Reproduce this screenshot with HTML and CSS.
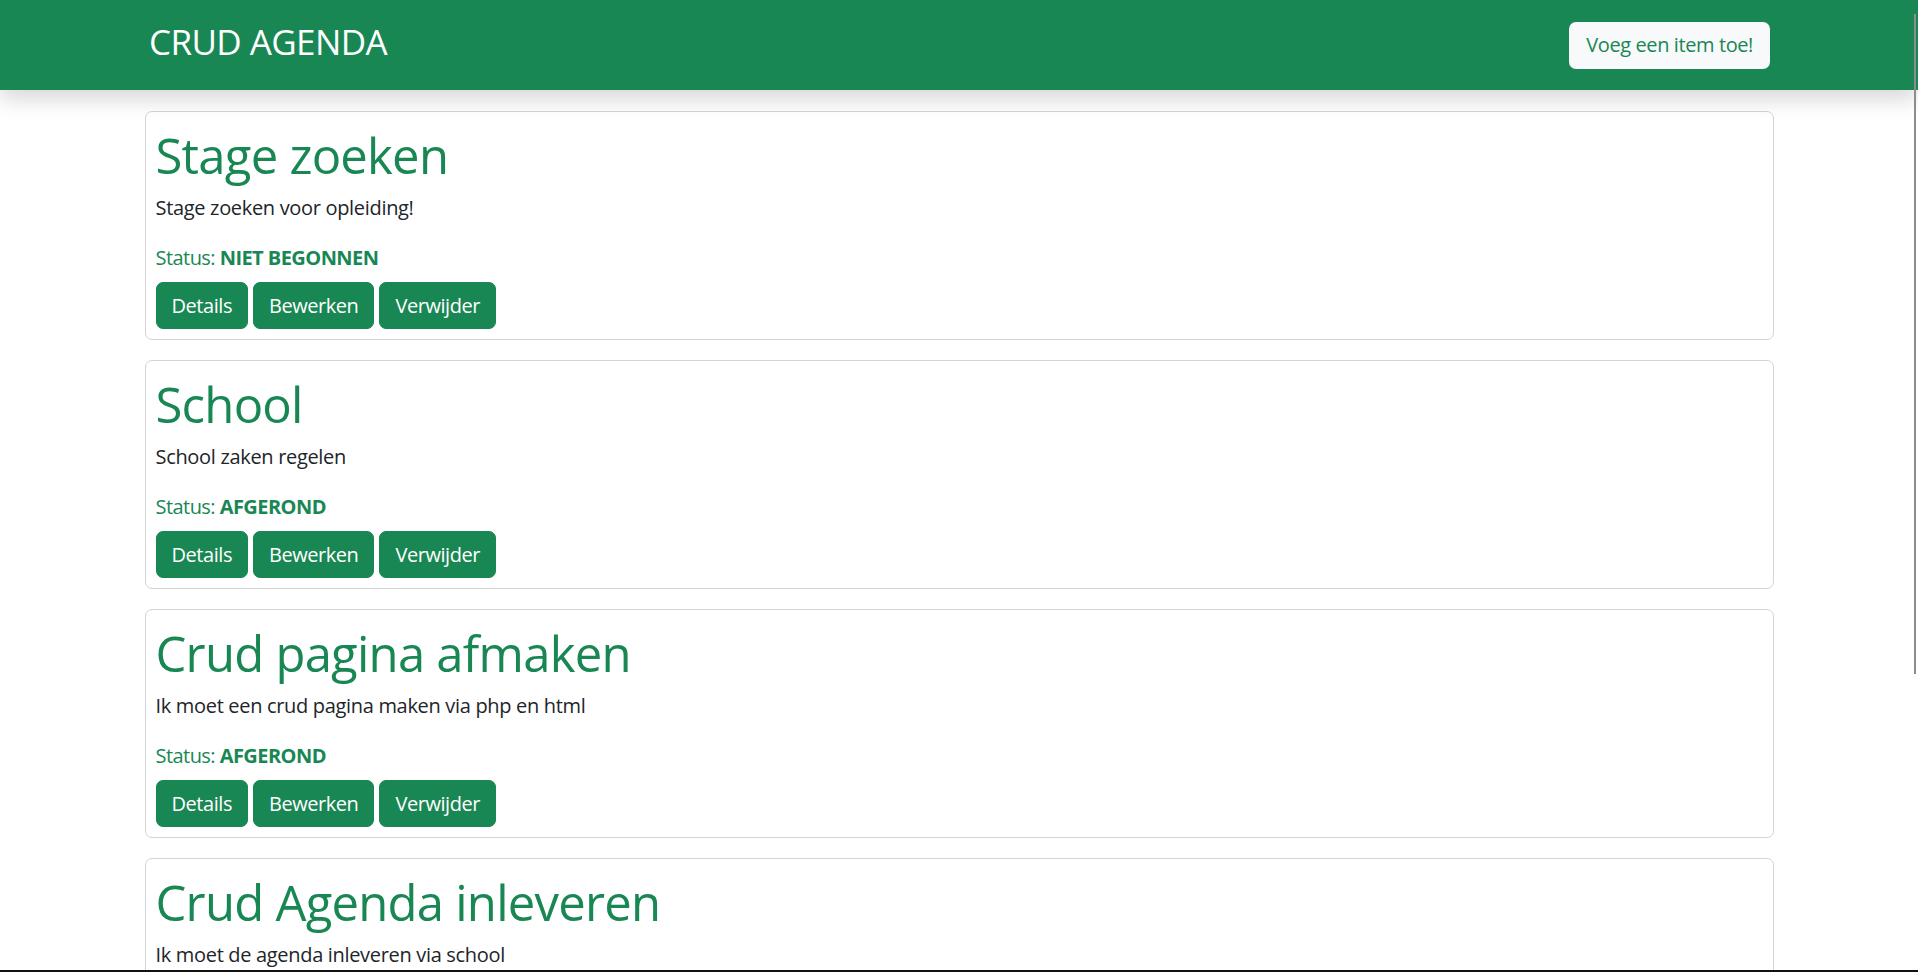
FILE: index.html
```html
<!DOCTYPE html>
<html lang="nl">
<head>
<meta charset="utf-8">
<title>CRUD Agenda</title>
<link rel="stylesheet" href="styles.css">
</head>
<body>
<header class="navbar">
  <div class="navbar-inner">
    <span class="brand">CRUD AGENDA</span>
    <a class="btn-add" href="#">Voeg een item toe!</a>
  </div>
</header>
<main class="container">
  <section class="card">
    <h1 class="card-title">Stage zoeken</h1>
    <p class="card-text">Stage zoeken voor opleiding!</p>
    <p class="status">Status: <strong>NIET BEGONNEN</strong></p>
    <div class="actions">
      <a class="btn" href="#">Details</a>
      <a class="btn" href="#">Bewerken</a>
      <a class="btn" href="#">Verwijder</a>
    </div>
  </section>
  <section class="card">
    <h1 class="card-title">School</h1>
    <p class="card-text">School zaken regelen</p>
    <p class="status">Status: <strong>AFGEROND</strong></p>
    <div class="actions">
      <a class="btn" href="#">Details</a>
      <a class="btn" href="#">Bewerken</a>
      <a class="btn" href="#">Verwijder</a>
    </div>
  </section>
  <section class="card">
    <h1 class="card-title">Crud pagina afmaken</h1>
    <p class="card-text">Ik moet een crud pagina maken via php en html</p>
    <p class="status">Status: <strong>AFGEROND</strong></p>
    <div class="actions">
      <a class="btn" href="#">Details</a>
      <a class="btn" href="#">Bewerken</a>
      <a class="btn" href="#">Verwijder</a>
    </div>
  </section>
  <section class="card">
    <h1 class="card-title">Crud Agenda inleveren</h1>
    <p class="card-text">Ik moet de agenda inleveren via school</p>
    <p class="status">Status: <strong>NIET BEGONNEN</strong></p>
    <div class="actions">
      <a class="btn" href="#">Details</a>
      <a class="btn" href="#">Bewerken</a>
      <a class="btn" href="#">Verwijder</a>
    </div>
  </section>
</main>
<div class="scroll-thumb"></div>
<div class="bottom-line"></div>
</body>
</html>
```

FILE: styles.css
```css
html, body {
  margin: 0;
  padding: 0;
  height: 100%;
  overflow: hidden;
  background: #fff;
}

body {
  font-family: "Open Sans", "Noto Sans", sans-serif;
  color: #212529;
  font-size: 20px;
  line-height: 30px;
}

.navbar {
  background: #198754;
  height: 90px;
  box-shadow: 0 10px 20px rgba(0, 0, 0, 0.15);
  display: flex;
  align-items: center;
  position: relative;
  z-index: 1;
}

.navbar-inner {
  width: 1622px;
  margin: 0 auto;
  display: flex;
  align-items: center;
  justify-content: space-between;
}

.brand {
  color: #fff;
  font-size: 35px;
  line-height: 44px;
  letter-spacing: -0.6px;
  margin-top: -6px;
  padding-left: 1px;
}

.btn-add {
  display: flex;
  align-items: center;
  height: 47px;
  box-sizing: border-box;
  padding: 0 17px;
  background: #f8f9fa;
  border-radius: 7px;
  color: #198754;
  text-decoration: none;
  font-size: 20px;
  letter-spacing: -0.4px;
}

.container {
  width: 1629px;
  margin: 21px auto 0;
}

.card {
  border: 1px solid #d4d4d4;
  border-radius: 7px;
  padding: 13px 10px 10px;
  margin-bottom: 20px;
}

.card-title {
  margin: 0 0 8px;
  font-size: 49px;
  line-height: 60px;
  letter-spacing: -0.75px;
  font-weight: 400;
  color: #198754;
}

.card-text {
  margin: 0 0 20px;
  letter-spacing: -0.32px;
}

.status {
  margin: 0 0 9px;
  color: #198754;
  letter-spacing: -0.55px;
}

.status strong {
  font-weight: 700;
}

.actions {
  display: flex;
  gap: 5px;
}

.btn {
  display: block;
  height: 47px;
  box-sizing: border-box;
  padding: 7.5px 15px;
  background: #198754;
  border: 1px solid #198754;
  border-radius: 7px;
  color: #fff;
  text-decoration: none;
  line-height: 30px;
  letter-spacing: -0.45px;
}

.scroll-thumb {
  position: fixed;
  top: 14px;
  right: 2px;
  width: 2px;
  height: 660px;
  background: #8c8c8c;
  z-index: 5;
}

.bottom-line {
  position: fixed;
  left: 0;
  right: 0;
  bottom: 0;
  height: 2px;
  background: #111;
  z-index: 5;
}
```
